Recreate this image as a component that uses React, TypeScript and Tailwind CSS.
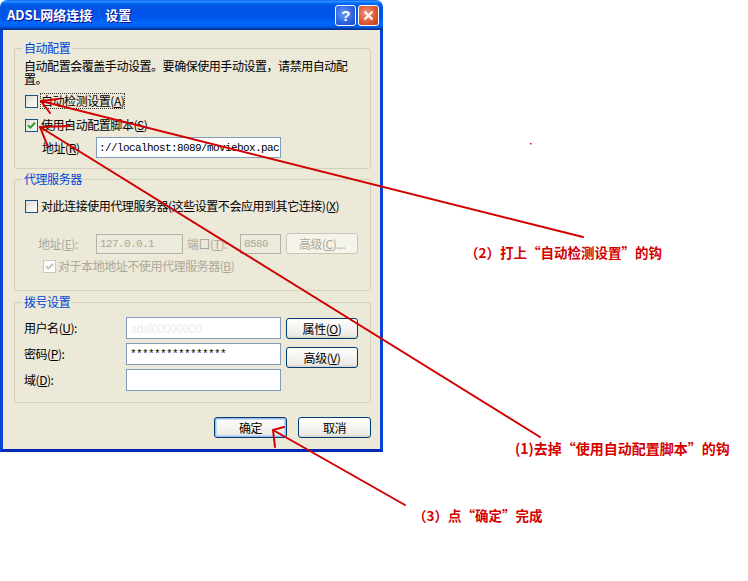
import React from "react";

type Children = { children?: React.ReactNode };

function CheckBox({ checked = false, disabled = false }: { checked?: boolean; disabled?: boolean }) {
  return (
    <span
      className={`w-[13px] h-[13px] shrink-0 border flex items-center justify-center ${
        disabled ? "border-[#CAC8BB] bg-white" : "border-[#1C5180] bg-[linear-gradient(135deg,#DCDCD7,#FFFFFF)]"
      }`}
    >
      {checked && (
        <svg width="9" height="9" viewBox="0 0 9 9">
          <path d="M1 4.2 L3.4 6.6 L8 1.8" fill="none" stroke={disabled ? "#C7C5B2" : "#21A121"} strokeWidth="2" />
        </svg>
      )}
    </span>
  );
}

function GroupBox({ title, className, children }: Children & { title: string; className: string }) {
  return (
    <fieldset className={`border border-[#D0D0BF] rounded-[3px] pl-[10px] ${className}`}>
      <legend className="ml-[-3px] px-[2px] leading-[14px] text-[#0046D5]">{title}</legend>
      {children}
    </fieldset>
  );
}

function XpButton({ children, className = "", disabled = false, primary = false }: Children & { className?: string; disabled?: boolean; primary?: boolean }) {
  if (disabled) {
    return (
      <div className={`h-[21px] shrink-0 rounded-[3px] border border-[#C9C7BA] bg-[#F5F4EA] text-[#ACA899] flex items-center justify-center ${className}`}>
        {children}
      </div>
    );
  }
  return (
    <div
      className={`h-[21px] shrink-0 rounded-[3px] border border-[#003C74] bg-[linear-gradient(180deg,#FFFFFF,#ECEBE6_86%,#D6D0C5)] text-black flex items-center justify-center ${
        primary ? "shadow-[inset_0_0_0_1px_#9DBBEC,inset_0_0_0_2px_#C5DAF7]" : ""
      } ${className}`}
    >
      {children}
    </div>
  );
}

const mono = "font-['Liberation_Mono',monospace] text-[11px] tracking-[-0.6px]";
const note = "absolute whitespace-nowrap leading-[16px] font-bold tracking-normal text-[#D40000]";

export default function App() {
  return (
    <div className="relative w-[748px] h-[581px] bg-white overflow-hidden font-['Noto_Sans_CJK_SC',sans-serif] text-[12px] tracking-[-0.45px] leading-[16px] text-black">
      {/* dialog window */}
      <div className="w-[383px] flex flex-col">
        <div className="h-[30px] rounded-t-[7px] bg-[linear-gradient(180deg,#0058EE_0%,#3593FF_4%,#288EFF_6%,#127DFF_8%,#036FFC_10%,#0262EE_14%,#0057E5_20%,#0054E3_24%,#0055EB_56%,#005BF5_66%,#026AFE_76%,#0062EF_86%,#0052D6_92%,#0040AB_94%,#003092_100%)] flex items-center pl-[7px] pr-[4px]">
          <span className="text-white font-bold text-[13px] tracking-normal [word-spacing:10px] [text-shadow:1px_1px_#0F1089] whitespace-pre">
            ADSL网络连接 设置
          </span>
          <div className="ml-auto flex gap-[2px] mt-[1px]">
            <div className="w-[21px] h-[21px] rounded-[3px] border border-white bg-[radial-gradient(circle_at_40%_40%,#6A9CF8,#2C62DE_60%,#1C48C0)] flex items-center justify-center text-white font-bold text-[15px] font-['Liberation_Sans',sans-serif]">
              ?
            </div>
            <div className="w-[21px] h-[21px] rounded-[3px] border border-white bg-[radial-gradient(circle_at_40%_40%,#F09A7D,#DC5B36_55%,#C2381A)] flex items-center justify-center">
              <svg width="11" height="11" viewBox="0 0 11 11">
                <path d="M1.5 1.5 L9.5 9.5 M9.5 1.5 L1.5 9.5" stroke="white" strokeWidth="2.2" />
              </svg>
            </div>
          </div>
        </div>

        <div className="h-[422px] bg-[#ECE9D8] border-x-[3px] border-b-[3px] border-x-[#0842D6] border-b-[#0029B8] pl-[11px] pr-[9px] pt-[11px] flex flex-col">
          {/* auto config */}
          <GroupBox title="自动配置" className="h-[128px]">
            <p className="mt-[4px] -ml-[1px] leading-[13px]">
              自动配置会覆盖手动设置。要确保使用手动设置，请禁用自动配
              <br />
              置。
            </p>
            <div className="mt-[8px] h-[16px] flex items-center">
              <CheckBox />
              <span className="ml-[2px] border border-dotted border-[#333] leading-[14px]">
                自动检测设置(<u>A</u>)
              </span>
            </div>
            <div className="mt-[8px] h-[16px] flex items-center">
              <CheckBox checked />
              <span className="ml-[2px] border border-transparent leading-[14px]">
                使用自动配置脚本(<u>S</u>)
              </span>
            </div>
            <div className="mt-[4px] h-[21px] flex items-center">
              <span className="ml-[17px] w-[54px]">
                地址(<u>R</u>)
              </span>
              <div className={`w-[185px] h-[21px] border border-[#7F9DB9] bg-white flex items-center pl-[2px] overflow-hidden whitespace-nowrap ${mono}`}>
                ://localhost:8089/moviebox.pac
              </div>
            </div>
          </GroupBox>

          {/* proxy */}
          <GroupBox title="代理服务器" className="mt-[3px] h-[119px]">
            <div className="mt-[12px] h-[16px] flex items-center">
              <CheckBox />
              <span className="ml-[3px]">
                对此连接使用代理服务器(这些设置不会应用到其它连接)(<u>X</u>)
              </span>
            </div>
            <div className="mt-[19px] h-[21px] flex items-center text-[#ACA899]">
              <span className="ml-[13px] w-[58px]">
                地址(<u>E</u>):
              </span>
              <div className={`w-[87px] h-[20px] border border-[#B5B3A6] bg-[#EBEADB] flex items-center pl-[3px] ${mono}`}>127.0.0.1</div>
              <span className="ml-[4px] w-[53px]">
                端口(<u>T</u>):
              </span>
              <div className={`w-[41px] h-[20px] border border-[#B5B3A6] bg-[#EBEADB] flex items-center pl-[3px] ${mono}`}>8580</div>
              <XpButton disabled className="ml-[5px] w-[72px]">
                高级(<u>C</u>)...
              </XpButton>
            </div>
            <div className="mt-[4px] h-[16px] flex items-center text-[#ACA899]">
              <span className="ml-[18px]">
                <CheckBox checked disabled />
              </span>
              <span className="ml-[2px]">
                对于本地地址不使用代理服务器(<u>B</u>)
              </span>
            </div>
          </GroupBox>

          {/* dial-up */}
          <GroupBox title="拨号设置" className="mt-[4px] h-[108px]">
            <div className="flex">
              <div className="mt-[8px] flex flex-col gap-[4px]">
                <div className="flex items-center">
                  <span className="-ml-[1px] w-[102px]">
                    用户名(<u>U</u>):
                  </span>
                  <div className="w-[155px] h-[22px] border border-[#7F9DB9] bg-white flex items-center pl-[3px] text-[#EDEDED]">
                    adsl00000000
                  </div>
                </div>
                <div className="flex items-center">
                  <span className="-ml-[1px] w-[102px]">
                    密码(<u>P</u>):
                  </span>
                  <div className={`w-[155px] h-[22px] border border-[#7F9DB9] bg-white flex items-center pl-[3px] ${mono}`}>
                    ****************
                  </div>
                </div>
                <div className="flex items-center">
                  <span className="-ml-[1px] w-[102px]">
                    域(<u>D</u>):
                  </span>
                  <div className="w-[155px] h-[22px] border border-[#7F9DB9] bg-white" />
                </div>
              </div>
              <div className="ml-[5px] flex flex-col">
                <XpButton className="mt-[9px] w-[72px]">
                  属性(<u>O</u>)
                </XpButton>
                <XpButton className="mt-[8px] w-[72px]">
                  高级(<u>V</u>)
                </XpButton>
              </div>
            </div>
          </GroupBox>

          <div className="mt-[14px] flex justify-end gap-[11px]">
            <XpButton primary className="w-[73px]">
              确定
            </XpButton>
            <XpButton className="w-[73px]">取消</XpButton>
          </div>
        </div>
      </div>

      {/* red annotation arrows */}
      <svg className="absolute left-0 top-0 pointer-events-none" width="748" height="581">
        <g stroke="#D00000" strokeWidth="2" fill="none" strokeLinecap="round" strokeLinejoin="round">
          <line x1="583" y1="237" x2="41" y2="101" />
          <polyline points="58,99 41,101 50,113" />
          <line x1="540" y1="437" x2="40" y2="127" />
          <polyline points="70,126 40,127 48,147" />
          <line x1="405" y1="505" x2="273" y2="430" />
          <polyline points="284,427 273,430 275,447" />
        </g>
        <rect x="530" y="143" width="1.5" height="1.5" fill="#D00000" />
      </svg>

      <div className={`${note} text-[13.5px] left-[465px] top-[244px]`}>（2）打上“自动检测设置”的钩</div>
      <div className={`${note} text-[14px] left-[515px] top-[440px]`}>(1)去掉“使用自动配置脚本”的钩</div>
      <div className={`${note} text-[13.5px] left-[413px] top-[507px]`}>（3）点“确定”完成</div>
    </div>
  );
}
